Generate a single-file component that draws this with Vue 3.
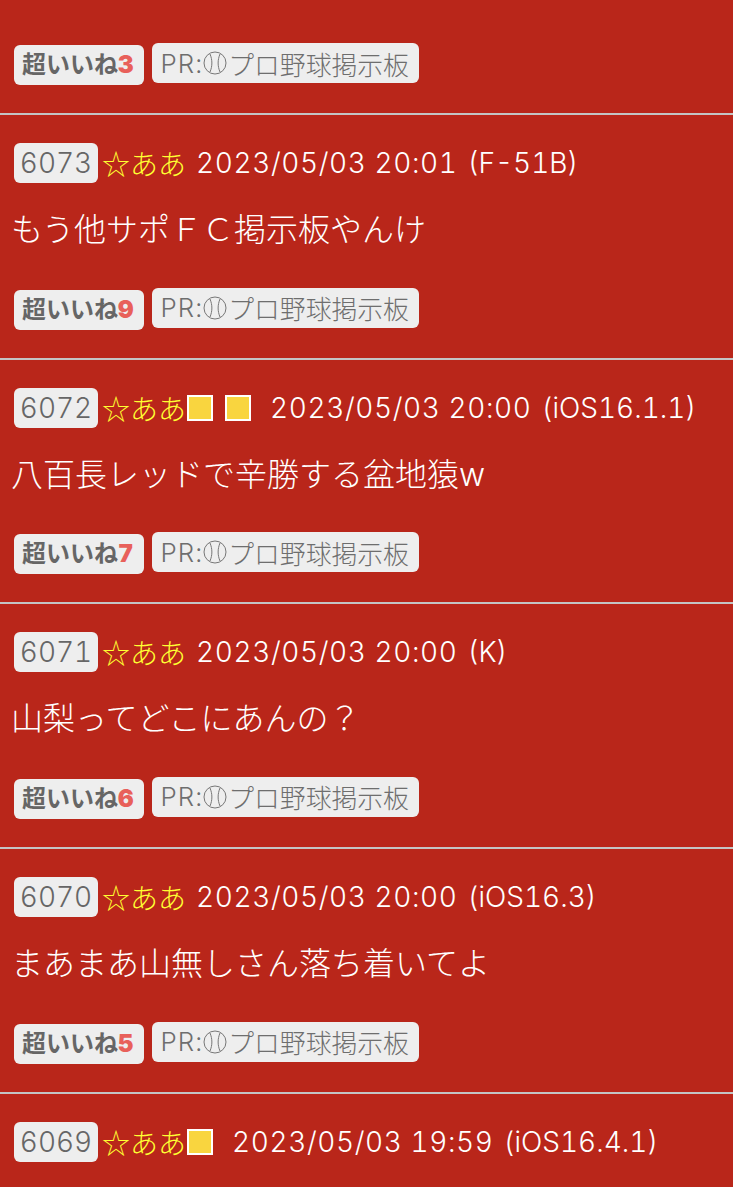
<template>
  <div class="board">
    <div class="post first">
      <div class="actions">
        <span class="like">超いいね<b>3</b></span>
        <span class="pr"><span class="lab">PR:</span><svg class="ball" viewBox="0 0 24 24"><circle cx="12" cy="12" r="11"/><path d="M7 3c2.5 6 2.5 12 0 18M17 3c-2.5 6-2.5 12 0 18"/></svg>プロ野球掲示板</span>
      </div>
    </div>

    <div class="post" v-for="post in posts" :key="post.no">
      <div class="head">
        <span class="no">{{ post.no }}</span>
        <span class="name">☆ああ</span>
        <i class="flag" v-for="n in post.flags" :key="n"></i>
        <span class="date">{{ post.date }}</span>
        <span class="device">({{ post.device }})</span>
      </div>
      <template v-if="post.text">
        <p class="msg">{{ post.text }}</p>
        <div class="actions">
          <span class="like">超いいね<b>{{ post.likes }}</b></span>
          <span class="pr"><span class="lab">PR:</span><svg class="ball" viewBox="0 0 24 24"><circle cx="12" cy="12" r="11"/><path d="M7 3c2.5 6 2.5 12 0 18M17 3c-2.5 6-2.5 12 0 18"/></svg>プロ野球掲示板</span>
        </div>
      </template>
    </div>
  </div>
</template>

<script setup>
const posts = [
  { no: 6073, flags: 0, date: '2023/05/03 20:01', device: 'F-51B', text: 'もう他サポＦＣ掲示板やんけ', likes: 9 },
  { no: 6072, flags: 2, date: '2023/05/03 20:00', device: 'iOS16.1.1', text: '八百長レッドで辛勝する盆地猿w', likes: 7 },
  { no: 6071, flags: 0, date: '2023/05/03 20:00', device: 'K', text: '山梨ってどこにあんの？', likes: 6 },
  { no: 6070, flags: 0, date: '2023/05/03 20:00', device: 'iOS16.3', text: 'まあまあ山無しさん落ち着いてよ', likes: 5 },
  { no: 6069, flags: 1, date: '2023/05/03 19:59', device: 'iOS16.4.1' },
]
</script>

<style>
html, body {
  background: #b9261a;
  overflow: hidden;
}
</style>

<style scoped>
.board {
  height: 1187px;
  overflow: hidden;
  background: #b9261a;
  color: #fff;
  font-family: Inter, "Noto Sans CJK JP", sans-serif;
  font-size: 28px;
  font-weight: 300;
  font-variant-numeric: tabular-nums;
}

.post {
  padding: 28px 14px 28px 14px;
  border-bottom: 2px solid #c4c4c4;
}

.post.first {
  padding-top: 43px;
}

.head {
  display: flex;
  align-items: center;
  height: 40px;
  white-space: nowrap;
}

.no {
  display: block;
  width: 84px;
  height: 40px;
  line-height: 40px;
  text-align: center;
  background: #eee;
  color: #666;
  border-radius: 6px;
}

.name {
  margin-left: 4px;
  color: #ffff33;
  font-family: "Noto Sans CJK JP", sans-serif;
}

.flag {
  display: block;
  box-sizing: border-box;
  width: 26px;
  height: 26px;
  margin-left: 1px;
  margin-right: 11px;
  background: #f9d53f;
  border: 2px solid #fff;
}

.date {
  margin-left: 10px;
  letter-spacing: 0.6px;
}

.flag + .date {
  margin-left: 8px;
}

.device {
  margin-left: 10px;
}

.msg {
  margin: 27px 0 37.67px -3px;
  font-size: 32px;
  line-height: 40px;
}

.actions {
  display: flex;
  align-items: flex-start;
  gap: 8px;
  height: 42px;
}

.like {
  display: block;
  margin-top: 2px;
  height: 40px;
  line-height: 40px;
  padding: 0 11px 0 8px;
  background: #eee;
  color: #666;
  border-radius: 6px;
  font-size: 24px;
  font-weight: 700;
}

.like b {
  color: #e8605a;
}

.pr {
  display: flex;
  align-items: center;
  height: 40px;
  padding: 0 10px 0 8px;
  background: #eee;
  color: #6e6e6e;
  border-radius: 6px;
  font-size: 25.8px;
}

.lab {
  letter-spacing: 1.1px;
}

.ball {
  width: 24px;
  height: 24px;
  margin: 0 1px 0 0;
  fill: none;
  stroke: #777;
  stroke-width: 1;
}
</style>
